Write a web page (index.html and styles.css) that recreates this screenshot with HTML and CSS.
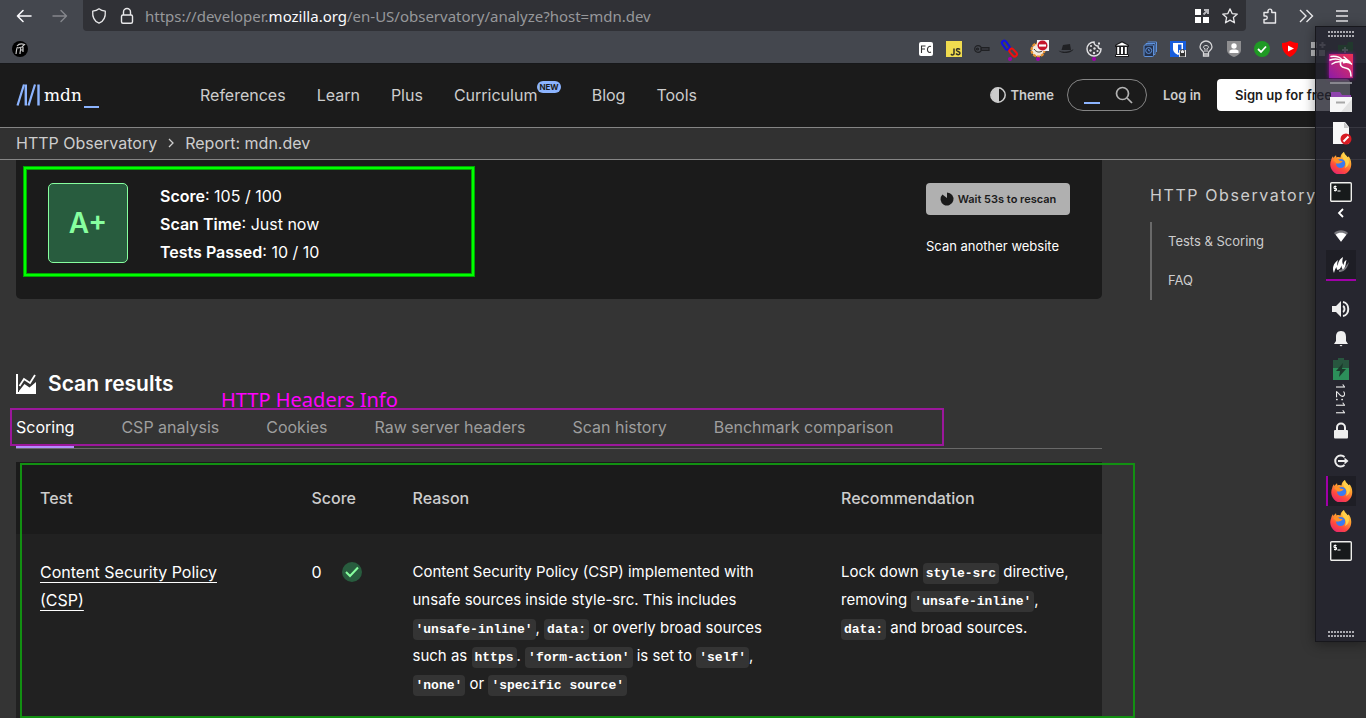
FILE: index.html
```html
<!DOCTYPE html>
<html lang="en">
<head>
<meta charset="utf-8">
<meta name="viewport" content="width=device-width, initial-scale=1">
<title>HTTP Observatory Report: mdn.dev</title>
<link rel="stylesheet" href="styles.css">
</head>
<body>
<svg class="defs" width="0" height="0" aria-hidden="true">
  <defs>
    <linearGradient id="foxBody" x1="0.8" y1="0" x2="0.3" y2="1"><stop offset="0" stop-color="#ffe14d"/><stop offset=".4" stop-color="#ff9a2e"/><stop offset=".7" stop-color="#ff4b3d"/><stop offset="1" stop-color="#e5246e"/></linearGradient>
    <linearGradient id="kaliBg" x1="1" y1="0" x2="0" y2="1"><stop offset="0" stop-color="#ee3050"/><stop offset="1" stop-color="#8d1ba8"/></linearGradient>
    <symbol id="firefox" viewBox="0 0 22 22">
      <path d="M14 0c0 2.500 1.800 3.500 3.300 5.200 1-.2 1.200-1 1.200-1 1.600 1.800 2.700 4.500 2.700 7A10.500 10.500 0 1 1 1.200 8c.2-1.600.9-2.900 1.800-3.800l.5 1.700C4.500 4.700 5.200 3.800 6 3.200l.5 2.200c1.500-.6 3-.4 4 .2C10.500 3 12 1 14 0z" fill="url(#foxBody)"/>
      <circle cx="10.600" cy="11.500" r="4.600" fill="#3b7bf0"/>
      <path d="M3 8c2-1.500 4.800-1.300 6.300.4l3.400.8c-.6 1.400-2 1.500-3.200 2C7.800 12 7 11 6.500 11.800 6 10.500 4.500 9.500 3 8z" fill="#ff9226"/>
      <path d="M14 0c0 2.500 5.500 4.800 5 10.500-.4 3-2.700 5-4 5.500 1.300-2.800 1-6-.8-8C12.300 6 11 3 14 0z" fill="#ffd04a"/>
    </symbol>
    <symbol id="terminal" viewBox="0 0 22 20">
      <rect x=".7" y=".7" width="20.600" height="18.600" rx="1" fill="#171a1b" stroke="#eeeeec" stroke-width="1.400"/>
      <path d="M6.500 4.500H4v2h2.500v2H4M5.200 3.500v6M7.500 9h3" fill="none" stroke="#fff"/>
    </symbol>
    <symbol id="grip" viewBox="0 0 26 6">
      <path d="M0 1h26M0 5h26" stroke="#aaaab0" stroke-width="2" stroke-dasharray="2 1"/>
    </symbol>
  </defs>
</svg>

<div class="window">
  <div class="toolbar">
    <button class="tool back" aria-label="Back"><svg width="16" height="16" viewBox="0 0 16 16" fill="none" stroke="#fbfbfe" stroke-width="1.600" stroke-linecap="round" stroke-linejoin="round"><path d="M15 8H1.500M7 2.500 1.500 8 7 13.500"/></svg></button>
    <button class="tool forward" aria-label="Forward" disabled><svg width="16" height="16" viewBox="0 0 16 16" fill="none" stroke="#85878c" stroke-width="1.400" stroke-linecap="round" stroke-linejoin="round"><path d="M1 8h13.500M9 2.500 14.500 8 9 13.500"/></svg></button>
    <div class="urlbar">
      <svg width="16" height="16" viewBox="0 0 16 16" fill="none" stroke="#e8e8ea" stroke-width="1.300"><path d="M8 .8c2.200 1.800 4.500 2.200 6.300 2.400.4 5.500-1.300 10-6.300 12-5-2-6.700-6.500-6.300-12C3.500 3 5.800 2.600 8 .8z" stroke-linejoin="round"/></svg>
      <svg width="16" height="16" viewBox="0 0 16 16" fill="none" stroke="#e8e8ea" stroke-width="1.400"><rect x="2.500" y="7" width="11" height="8.300" rx="1.500"/><path d="M4.500 7V4a3.500 3.500 0 0 1 7 0v3"/></svg>
      <div class="url" role="textbox" aria-label="Address">https://developer.<span class="url-host">mozilla.org</span>/en-US/observatory/analyze?host=mdn.dev</div>
      <svg width="16" height="16" viewBox="0 0 16 16"><path d="M1 1h6v6H1zM1 9h6v6H1zM9 9h6v6H9z" fill="#fff"/><path d="M10 2h4v4M14 2 9.500 6.500" fill="none" stroke="#b8b8bc" stroke-width="2"/></svg>
      <svg width="16" height="16" viewBox="0 0 16 16" fill="none" stroke="#e8e8ea" stroke-width="1.300" stroke-linejoin="round"><path d="m8 .8 2.100 4.800 5.200.5-3.900 3.500 1.100 5.200L8 12.100l-4.500 2.700 1.100-5.200L.7 6.100l5.200-.5z"/></svg>
    </div>
    <button class="tool" aria-label="Extensions"><svg width="16" height="16" viewBox="0 0 16 16" fill="none" stroke="#e8e8ea" stroke-width="1.400" stroke-linejoin="round"><path d="M2 15V11.500h1.500a1.700 1.700 0 0 0 0-3.500H2V4.500h4V3a1.900 1.900 0 0 1 3.800 0v1.500H13.500V15z"/></svg></button>
    <button class="tool" aria-label="More tools"><svg width="16" height="16" viewBox="0 0 16 16" fill="none" stroke="#e8e8ea" stroke-width="1.400"><path d="m2 2 6 6-6 6M8.500 2l6 6-6 6"/></svg></button>
    <button class="tool" aria-label="Open application menu"><svg width="16" height="16" viewBox="0 0 16 16" stroke="#e8e8ea" stroke-width="1.400"><path d="M2 3h12M2 8h12M2 13h12"/></svg></button>
  </div>

  <div class="bookmarks">
    <svg class="profile" width="16" height="16" viewBox="0 0 16 16"><circle cx="8" cy="8" r="8" fill="#000"/><path d="M4 13c.5-3 .2-5 1.500-7M8 13c0-3 1-4 .5-6M11 11V6M5 5c2-2.500 5-2.500 7.500-1.500L10 6 6 7M8 9h3" fill="none" stroke="#c8c8c8" stroke-width="1.200"/></svg>
    <svg width="16" height="16" viewBox="0 0 16 16"><rect x="1" y="1" width="14" height="14" rx="2" fill="#fff"/><path d="M3.500 12V5h4M3.500 8H7M13 5.500c-4-1.500-5 6-1 6l1-.5" fill="none" stroke="#333" stroke-width="1.100"/></svg>
    <svg width="16" height="16" viewBox="0 0 16 16"><path d="M0 0h16v16H0z" fill="#f0db4f"/><path d="M8 7.500v5c0 1.500-2 2-3 .5M14 8.500c-1.500-1.500-4-.7-3.400 1 .6 1.300 3.500.8 3.400 2.700-.2 2-3 1.800-4 .3" fill="none" stroke="#333226" stroke-width="1.500"/></svg>
    <svg width="16" height="16" viewBox="0 0 16 16" fill="none" stroke="#202124" stroke-width="1.200"><circle cx="4" cy="8" r="3.300"/><circle cx="3.500" cy="8" r="1"/><path d="M7 6.500h8v3H7M6 8h9"/></svg>
    <svg width="16" height="16" viewBox="0 0 16 16" fill="none"><rect x="-1" y="2" width="10" height="4.500" rx="2.200" transform="rotate(55 4 4)" stroke="#1010e8" stroke-width="2"/><rect x="7" y="9" width="9" height="4.500" rx="2.200" transform="rotate(48 11 11)" stroke="#f01010" stroke-width="2"/><circle cx="8" cy="18" r="2" fill="#a000a8"/></svg>
    <svg width="16" height="16" viewBox="0 0 16 16"><circle cx="8" cy="9" r="6.500" fill="#f3eadc" stroke="#e89230" stroke-width="2.200" stroke-dasharray="3 1"/><path d="M4 8c2 3 5 4 8 2" fill="none" stroke="#333"/><path d="M7-1h12v11H7z" fill="#f4f4f6"/><circle cx="12.500" cy="4.500" r="5" fill="#c4142c"/><path d="M9 4.500h7" stroke="#fff" stroke-width="2.200"/><circle cx="8" cy="18" r="2" fill="#a000a8"/></svg>
    <svg width="16" height="16" viewBox="0 0 16 16" fill="#202124"><path d="M3.500 9 5 4l7-1 1 6z"/><path d="M.5 9.500c4 2 11 1.500 15-1.500-1 4-11 6-15 1.500z"/></svg>
    <svg width="16" height="16" viewBox="0 0 16 16"><path d="M8 1a7 7 0 1 0 7 7c-2 0-3-1-3-3-2 0-4-1.500-4-4z" fill="#3c3d42" stroke="#dedee0" stroke-width="1.500"/><path d="M12 1.500h2v2h-2z" fill="#dedee0"/><g fill="#dedee0"><circle cx="5" cy="5" r="1.100"/><circle cx="8.500" cy="7.500" r="1.200"/><circle cx="4.500" cy="9.500" r="1.200"/><circle cx="11.500" cy="10" r="1.100"/><circle cx="8" cy="12" r="1.200"/></g><circle cx="8" cy="18" r="2" fill="#a000a8"/></svg>
    <svg width="16" height="16" viewBox="0 0 16 16"><path d="M8 0 15 4v2H1V4zM2 6h12v8H2zM1 13.500h14V16H1z" fill="#1a1a1c"/><path d="M2 4.500 8 1.500l6 3zM3.200 6h2v7h-2zM7 6h2v7H7zM10.800 6h2v7h-2zM2 14h12v1H2z" fill="#fff"/></svg>
    <svg width="16" height="16" viewBox="0 0 16 16" fill="#24324d" stroke="#5f92dc"><path d="M5.500 1h9v10"/><path d="M4 2.500h9v11H4z"/><rect x="2" y="4" width="9.500" height="11.500" rx="1"/><circle cx="6.700" cy="9.500" r="3" fill="none"/><path d="M6.700 8v1.800H8" fill="none"/></svg>
    <svg width="16" height="16" viewBox="0 0 16 16"><path d="M0 0h16v16H0z" fill="#175ddc"/><path d="M3 2h10v6c0 3-3 5-5 6-2-1-5-3-5-6z" fill="#fff"/><path d="M8 3.500h3.500V8c0 2-1.500 3-3.500 4z" fill="#175ddc"/><path d="M9 9h7v7H9z" fill="#e8e8ea"/><path d="M10.500 12V10.500a2 2 0 0 1 4 0V12" fill="none" stroke="#333"/><path d="M10 12h5v3.500h-5z" fill="#333"/></svg>
    <svg width="16" height="16" viewBox="0 0 16 16" fill="none" stroke="#d6d6d8" stroke-width="1.300"><path d="M5.500 11.500C5.500 10 2 9 2 6a6 6 0 0 1 12 0c0 3-3.500 4-3.500 5.500V15h-5zM5.500 13h5"/><path d="M7 11V7.500C4.500 7.500 5 4.500 8 4.500s3.500 3 1 3V11" stroke-width="1"/></svg>
    <svg width="16" height="16" viewBox="0 0 16 16"><path d="M1 0h14v9c0 3-3 5.500-7 7-4-1.500-7-4-7-7z" fill="#8e8e90"/><circle cx="8" cy="5" r="2.700" fill="#fff"/><path d="M3.500 12V9.800C5 8 11 8 12.500 9.800V12z" fill="#fff"/></svg>
    <svg width="16" height="16" viewBox="0 0 16 16"><circle cx="8" cy="8" r="8" fill="#1f9a24"/><path d="m4 8 3 3 5-5.500" fill="none" stroke="#fff" stroke-width="1.800"/></svg>
    <svg width="16" height="16" viewBox="0 0 16 16"><path d="M0 2C4 2 6 .5 8 0c2 .5 4 2 8 2 .5 7-3 11.500-8 14C3 13.500-.5 9 0 2z" fill="#f00"/><path d="m6 4.500 6 3-6 3z" fill="#fff"/></svg>
    <svg width="16" height="16" viewBox="0 0 16 16"><path d="M1 1h6v6H1zM1 9h6v6H1zM9 9h6v6H9z" fill="#b9babd"/><path d="M12.500 1v6M9.500 4h6" stroke="#b9babd" stroke-width="2"/></svg>
    <svg width="16" height="16" viewBox="0 0 16 16"><path d="M0 4h9l1-3h5v15H0z" fill="#1d8a2c"/><path d="M7 6v6M4 9h6" stroke="#cfd" stroke-width="2"/></svg>
  </div>

  <div class="page">
    <header class="site-header">
      <a class="logo" href="#" aria-label="MDN home">
        <svg width="26" height="22" viewBox="0 0 26 22" fill="none" stroke="#8cb4ff"><path d="M1.500 21.500 8 .5M12.500 21.500 19 .5" stroke-width="2.200"/><path d="M9.800.500v21M22.500.500v21" stroke-width="2.400"/></svg>
        <span class="logo-word">mdn</span><span class="logo-cursor"></span>
      </a>
      <nav class="main-nav" aria-label="Main">
        <a href="#">References</a>
        <a href="#">Learn</a>
        <a href="#">Plus</a>
        <a href="#">Curriculum<sup class="new-badge">NEW</sup></a>
        <a href="#">Blog</a>
        <a href="#">Tools</a>
      </nav>
      <div class="header-actions">
        <button class="theme"><svg width="16" height="16" viewBox="0 0 16 16"><circle cx="8" cy="8" r="7.200" fill="none" stroke="#cdcdcd" stroke-width="1.500"/><path d="M8.500 1v14A7 7 0 0 1 8.500 1z" fill="#cdcdcd" stroke="#cdcdcd"/></svg>Theme</button>
        <form class="search">
          <input type="search" aria-label="Search MDN">
          <button type="button" aria-label="Search"><svg width="18" height="18" viewBox="0 0 18 18" fill="none" stroke="#b3b3b3" stroke-width="1.700"><circle cx="7.500" cy="7.500" r="6"/><path d="m12 12 5 5"/></svg></button>
        </form>
        <a class="login" href="#">Log in</a>
        <a class="signup" href="#">Sign up for free</a>
      </div>
    </header>

    <nav class="breadcrumbs" aria-label="Breadcrumb">
      <a href="#">HTTP Observatory</a>
      <svg width="6" height="10" viewBox="0 0 6 10" fill="none" stroke="#cdcdcd" stroke-width="1.300"><path d="m1 1 4 4-4 4"/></svg>
      <a href="#">Report: mdn.dev</a>
    </nav>

    <div class="columns">
      <main class="report">
        <section class="summary">
          <div class="grade">A+</div>
          <div class="facts">
            <div><b>Score</b>: 105 / 100</div>
            <div><b>Scan Time</b>: Just now</div>
            <div><b>Tests Passed</b>: 10 / 10</div>
          </div>
          <div class="rescan">
            <button class="wait" disabled><svg width="14" height="14" viewBox="0 0 14 14"><path d="M7 6V.5a6.500 6.500 0 1 1-4.600 1.900z" fill="#1b1b1b"/></svg>Wait 53s to rescan</button>
            <a href="#">Scan another website</a>
          </div>
          <div class="mark mark-summary"></div>
        </section>

        <h2 class="results-title"><svg width="20" height="20" viewBox="0 0 20 20"><path d="M1 0v19h19" fill="none" stroke="#fff" stroke-width="2"/><path d="M3.500 12 8 5l6 4 5-8" fill="none" stroke="#fff" stroke-width="1.800"/><path d="m3 17 5.500-7 5 3.500L20 8v11H3z" fill="#fff"/></svg>Scan results</h2>

        <div class="tabs" role="tablist">
          <button class="tab active" role="tab" aria-selected="true">Scoring</button>
          <button class="tab" role="tab">CSP analysis</button>
          <button class="tab" role="tab">Cookies</button>
          <button class="tab" role="tab">Raw server headers</button>
          <button class="tab" role="tab">Scan history</button>
          <button class="tab" role="tab">Benchmark comparison</button>
          <div class="mark mark-tabs"></div>
          <div class="note">HTTP Headers Info</div>
        </div>

        <div class="results">
          <table class="scores">
            <thead>
              <tr><th class="col-test">Test</th><th class="col-score">Score</th><th>Reason</th><th class="col-advice">Recommendation</th></tr>
            </thead>
            <tbody>
              <tr>
                <td><a href="#">Content Security Policy (CSP)</a></td>
                <td><div class="score">0<svg width="20" height="20" viewBox="0 0 20 20"><circle cx="10" cy="10" r="10" fill="#285c3e"/><path d="m4 10 4 4 8-8.500" fill="none" stroke="#87ff9f" stroke-width="2"/></svg></div></td>
                <td class="prose">Content Security Policy (CSP) implemented with unsafe sources inside style-src. This includes <code>'unsafe-inline'</code>, <code>data:</code> or overly broad sources such as <code>https</code>. <code>'form-action'</code> is set to <code>'self'</code>, <code>'none'</code> or <code>'specific source'</code></td>
                <td class="prose">Lock down <code>style-src</code> directive, removing <code>'unsafe-inline'</code>, <code>data:</code> and broad sources.</td>
              </tr>
            </tbody>
          </table>
          <div class="mark mark-table"></div>
        </div>
      </main>

      <aside class="sidebar">
        <h3>HTTP Observatory</h3>
        <ul>
          <li><a href="#">Tests &amp; Scoring</a></li>
          <li><a href="#">FAQ</a></li>
        </ul>
      </aside>
    </div>
  </div>
</div>

<div class="dock">
  <svg class="grip" width="26" height="6"><use href="#grip"/></svg>
  <div class="slot kali"><svg width="26" height="26" viewBox="0 0 26 26"><path d="M1 1h24v24H1z" fill="url(#kaliBg)"/><path d="M3 3.500c5-.5 9 .5 11 3.500M2 7c4-1.500 8-1.500 11 .5M4 11c3-2 6-2.500 9-2M13.500 7c-2.500 5-.5 7.500 4 8s5.500 4 5.500 8M14 8c3-1.500 6-.5 9.500 3M16 4l6 5" fill="none" stroke="#fff" stroke-width="1.500" stroke-linecap="round"/><path d="M14 6c3-.5 7 1 10 5.500-3-1.500-6-2-9-1z" fill="#fff"/></svg></div>
  <div class="slot files"><svg width="22" height="30" viewBox="0 0 22 30"><path d="M0 1h22" stroke="#88888f" stroke-width="2"/><path d="M1 10h9l2 3h9v4H1z" fill="#8e44ad"/><path d="M0 15h22v15H0z" fill="#f6f6f6"/><path d="M22 17v13H11z" fill="#e2e2e2"/><path d="M6 20.500h9" stroke="#a8a8a8" stroke-width="2"/></svg></div>
  <div class="slot"><svg width="22" height="24" viewBox="0 0 22 24"><path d="M3 1h12l4 5v17H3z" fill="#f8f8f8"/><path d="M14 1v6h5z" fill="#c8c8c8"/><circle cx="16" cy="18" r="5.500" fill="#d81c24"/><path d="m13.500 20.500 5-5" stroke="#fff" stroke-width="2"/></svg></div>
  <div class="slot"><svg width="22" height="22"><use href="#firefox"/></svg></div>
  <div class="slot short"><svg width="22" height="20"><use href="#terminal"/></svg></div>
  <div class="slot half"><svg width="6" height="8" viewBox="0 0 6 8" fill="none" stroke="#fff" stroke-width="1.800"><path d="M5 0 1 4l4 4"/></svg></div>
  <div class="slot"><svg width="14" height="13" viewBox="0 0 16 14"><path d="M8 14 0 4c4-4 12-4 16 0z" fill="#77777d"/><path d="M8 14 2 6c3-3 9-3 12 0z" fill="#fff"/></svg></div>
  <div class="slot tray"><svg width="18" height="18" viewBox="0 0 18 18"><path d="M7 16c4 0 8-2 10-10-3 3-3 7-10 8z" fill="#77777d"/><path d="M2 17C0 12 1 8 6 4c-1 3-1 4 0 6 0-4 1-6 5-9-1 4-1 6 .5 8 .5-3 1-4 3-5-1 4-.5 7-3.500 9.500-1-1-1.500-2-1.500-4-1 3-2 4-4 4.500-1-1-1-2-1-3-1.500 2-2 4-2.500 6z" fill="#fff"/></svg></div>
  <div class="slot spaced"><svg width="18" height="16" viewBox="0 0 18 16"><path d="M0 5h4l5-5v16l-5-5H0z" fill="#eee"/><path d="M11 5c2 1 2 5 0 6M11 1c7 1 7 13 0 14" fill="none" stroke="#eee" stroke-width="2"/></svg></div>
  <div class="slot"><svg width="14" height="16" viewBox="0 0 14 16" fill="#f0f0f0"><path d="M7 0c4 0 5 3 5 6v4l2 3H0l2-3V6c0-3 1-6 5-6zM5.500 14h3L7 15.500z"/></svg></div>
  <div class="slot"><svg width="16" height="22" viewBox="0 0 16 22"><path d="M0 2h5V0h6v2h5v8H0z" fill="#28563f"/><path d="M0 10h16v12H0z" fill="#2c8f5a"/><path d="m10 5-7 8h4l-1 6 7-8H9z" fill="#1c3a2c"/></svg></div>
  <div class="slot clock">12:11</div>
  <div class="slot"><svg width="14" height="16" viewBox="0 0 14 16"><path d="M3 8V4.500a4 4 0 0 1 8 0V8" fill="none" stroke="#eee" stroke-width="2"/><rect y="7" width="14" height="8.500" rx="1" fill="#eee"/></svg></div>
  <div class="slot"><svg width="16" height="14" viewBox="0 0 16 14" fill="none" stroke="#eee" stroke-width="2"><path d="M11.500 3a5.500 5.500 0 1 0 0 8"/><path d="M5 7h8"/><path d="m11.500 3.500 4 3.500-4 3.500z" fill="#eee" stroke="none"/></svg></div>
  <div class="slot current"><svg width="22" height="22"><use href="#firefox"/></svg></div>
  <div class="slot"><svg width="22" height="22"><use href="#firefox"/></svg></div>
  <div class="slot"><svg width="22" height="20"><use href="#terminal"/></svg></div>
  <svg class="grip grip-end" width="26" height="6"><use href="#grip"/></svg>
</div>
</body>
</html>
```

FILE: styles.css
```css
* { box-sizing: border-box; }

body {
  margin: 0;
  background: #343434;
  color: #fff;
  font: 16px/28px Inter, "Liberation Sans", sans-serif;
}

a { color: inherit; text-decoration: none; }
svg { display: block; flex: none; overflow: visible; }
.defs { position: absolute; }

button {
  margin: 0;
  padding: 0;
  border: 0;
  background: none;
  color: inherit;
  font: inherit;
}

.window {
  display: flex;
  flex-direction: column;
  height: 100vh;
  overflow: hidden;
}

/* Browser chrome */
.toolbar {
  display: flex;
  flex: none;
  align-items: center;
  gap: 20px;
  height: 31px;
  padding: 0 16px;
  background: #44474e;
}

.urlbar {
  display: flex;
  flex: 1;
  align-items: center;
  gap: 12px;
  height: 31px;
  margin: 0 -4px 0 -5px;
  padding: 0 8px;
  border-radius: 0 0 4px 4px;
  background: #303136;
}

.url {
  flex: 1;
  overflow: hidden;
  margin-left: -2px;
  color: #97989b;
  font: 15px/28px "Noto Sans", sans-serif;
  white-space: nowrap;
}

.url-host { color: #fbfbfe; }

.bookmarks {
  display: flex;
  flex: none;
  align-items: center;
  gap: 12px;
  height: 33px;
  padding: 3px 12px 0;
  border-bottom: 1px solid #17181a;
  background: #44474e;
}

.profile { margin-right: auto; }

/* Site header */
.page {
  flex: 1;
  min-height: 0;
  overflow: hidden;
}

.site-header {
  display: flex;
  align-items: center;
  height: 64px;
  padding: 0 16px 2px;
  border-bottom: 1px solid #858585;
  background: #1b1b1b;
  color: #cdcdcd;
}

.logo {
  display: flex;
  flex: none;
  align-items: center;
  gap: 2px;
  width: 184px;
}

.logo-word {
  color: #fff;
  font: 17px/26px "DejaVu Serif", serif;
}

.logo-cursor {
  align-self: flex-end;
  width: 15px;
  height: 2px;
  background: #8cb4ff;
}

.main-nav { display: flex; gap: 31px; }
.main-nav a { display: flex; }

.new-badge {
  height: 12px;
  padding: 0 2px;
  border-radius: 6px;
  background: #8cb4ff;
  color: #1b1b1b;
  font-size: 8px;
  font-weight: 700;
  line-height: 12px;
}

.header-actions {
  display: flex;
  align-items: center;
  gap: 16px;
  margin-left: auto;
  font-size: 13px;
  font-weight: 600;
  white-space: nowrap;
}

.theme {
  display: flex;
  align-items: center;
  gap: 4px;
}

.search {
  display: flex;
  align-items: center;
  width: 80px;
  height: 32px;
  margin-left: -3px;
  padding: 0 13px 0 16px;
  border: 1px solid #858585;
  border-radius: 16px;
}

.search input {
  width: 16px;
  height: 18px;
  margin-right: auto;
  padding: 0;
  border: 0;
  border-bottom: 2px solid #8cb4ff;
  background: none;
  color: #fff;
}

.signup {
  padding: 2px 18px;
  border-radius: 4px;
  background: #fff;
  color: #1b1b1b;
}

.breadcrumbs {
  display: flex;
  align-items: center;
  gap: 11px;
  height: 32px;
  padding: 0 16px 2px;
  border-bottom: 1px solid #858585;
  background: #313131;
  color: #cdcdcd;
}

/* Report */
.columns {
  display: grid;
  grid-template-columns: minmax(0, 1fr) 200px;
  gap: 48px;
  padding: 0 16px;
}

.summary {
  position: relative;
  display: flex;
  align-items: flex-start;
  gap: 32px;
  padding: 23px 32px 33px;
  border-radius: 0 0 5px 5px;
  background: #1b1b1b;
}

.grade {
  width: 80px;
  height: 80px;
  border: 1px solid #87ff9f;
  border-radius: 5px;
  background: #285c3e;
  color: #87ff9f;
  font-size: 28px;
  font-weight: 600;
  line-height: 78px;
  text-align: center;
}

.facts { margin-top: -1px; }
.facts b { font-weight: 600; }

.rescan {
  display: flex;
  flex-direction: column;
  gap: 17px;
  margin-left: auto;
  font-size: 13px;
}

.wait {
  display: flex;
  align-items: center;
  justify-content: center;
  gap: 4px;
  width: 144px;
  height: 32px;
  border-radius: 4px;
  background: #b0b0b0;
  color: #1b1b1b;
  font-size: 11px;
  font-weight: 600;
}

.results-title {
  display: flex;
  align-items: center;
  gap: 12px;
  margin: 71px 0 10px;
  font-size: 21px;
  font-weight: 600;
  line-height: 28px;
}

.tabs {
  position: relative;
  display: flex;
  gap: 47px;
  border-bottom: 1px solid #696969;
}

.tab {
  padding: 5px 0;
  border-bottom: 2px solid transparent;
  color: #9e9e9e;
}

.tab.active {
  border-bottom-color: #b58cff;
  color: #fff;
}

.results { position: relative; margin-top: 13px; }

.scores {
  width: 100%;
  border-collapse: collapse;
  table-layout: fixed;
  background: #212121;
}

.scores th,
.scores td {
  padding: 24px;
  text-align: left;
  vertical-align: top;
}

.scores th {
  padding: 22px 24px;
  background: #1b1b1b;
  color: #cdcdcd;
  font-weight: 500;
}

.scores .col-test { width: 25%; }
.scores .col-score { width: 101px; }
.scores .col-advice { width: 285px; }
.scores .prose { font-size: 15px; }

.scores td a {
  text-decoration: underline;
  text-decoration-thickness: 1px;
  text-underline-offset: 4px;
}

.score {
  display: flex;
  align-items: center;
  gap: 20px;
}

code {
  padding: 3px;
  border-radius: 4px;
  background: #343434;
  font: 700 13px/20px "Liberation Mono", monospace;
  white-space: nowrap;
}

/* Sidebar */
.sidebar { padding-top: 21px; color: #cdcdcd; }

.sidebar h3 {
  margin: 0 0 13px;
  font-size: 16px;
  font-weight: 400;
  letter-spacing: 0.1em;
  white-space: nowrap;
}

.sidebar ul {
  margin: 0;
  padding: 0 0 0 16px;
  border-left: 2px solid #696969;
  font-size: 13px;
  line-height: 39px;
  list-style: none;
}

/* Annotations drawn over the page */
.mark { position: absolute; pointer-events: none; }

.mark-summary {
  top: 7px;
  left: 8px;
  width: 450px;
  height: 109px;
  border: 2px solid #00ff00;
  box-shadow: 0 0 0 1px #00a800, inset 0 0 0 1px #00a800;
}

.mark-tabs {
  top: 0;
  bottom: 2px;
  left: -6px;
  width: 934px;
  border: 2px solid #9b179b;
}

.note {
  position: absolute;
  top: -22px;
  left: 205px;
  color: #ff00ff;
  font: 20px/28px "Noto Sans", sans-serif;
}

.mark-table {
  inset: 1px -33px 4px 4px;
  border: 2px solid #129012;
}

/* Desktop dock */
.dock {
  position: fixed;
  top: 26px;
  right: 0;
  display: flex;
  flex-direction: column;
  align-items: center;
  width: 51px;
  height: 616px;
  border: 1px solid #17171c;
  border-right: 0;
  background: rgba(35, 35, 46, 0.8);
  box-shadow: 0 2px 12px rgba(0, 0, 0, 0.4);
}

.grip { margin: 4px 0 12px; }
.grip-end { margin: auto 0 4px; }

.slot {
  display: flex;
  flex: none;
  align-items: center;
  justify-content: center;
  width: 30px;
  height: 30px;
}

.kali { height: 33px; filter: drop-shadow(0 0 2px #a000a8); }
.files { height: 36px; align-items: flex-start; }
.short { height: 27px; }
.half { height: 15px; }
.spaced { margin-top: 13px; }

.tray {
  height: 31px;
  border-bottom: 2px solid #a000a8;
  background: #1e1e25;
}

.clock {
  height: 32px;
  color: #eee;
  font: 13px/20px "Noto Sans", sans-serif;
  writing-mode: vertical-rl;
}

.current {
  border-left: 2px solid #a000a8;
  background: #1e1e25;
}
```
